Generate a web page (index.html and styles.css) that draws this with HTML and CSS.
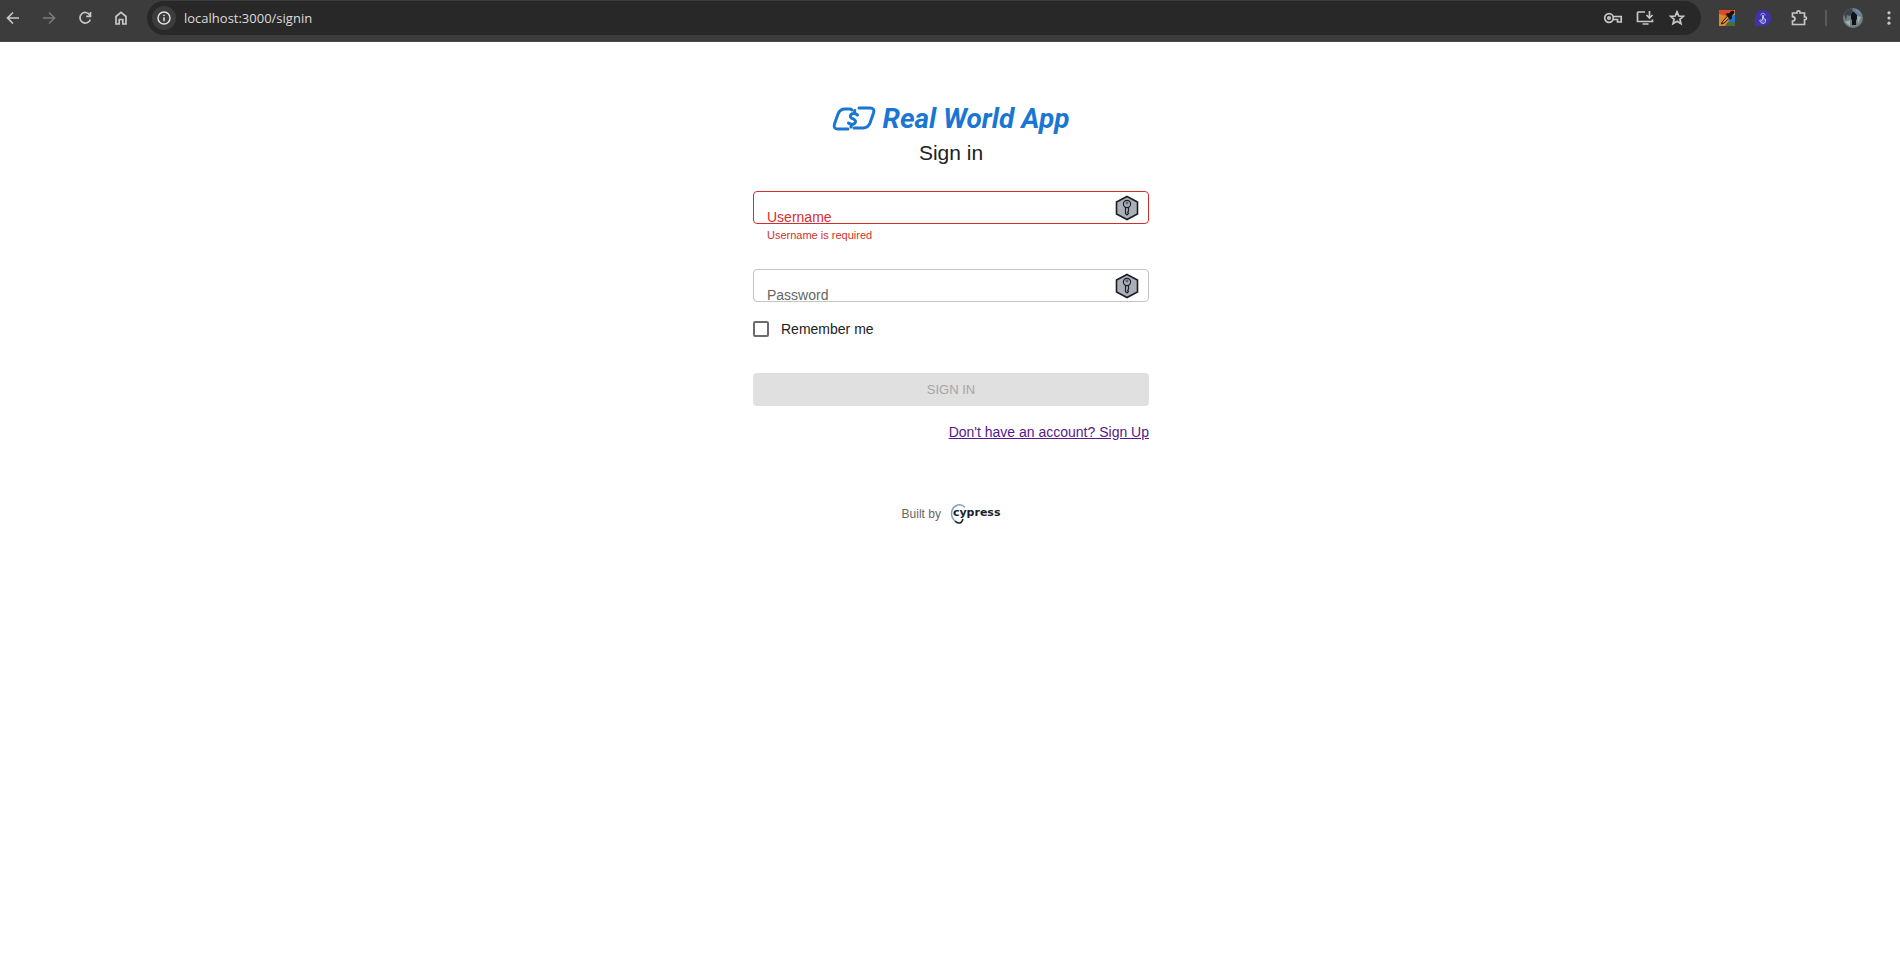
FILE: index.html
```html
<!DOCTYPE html>
<html lang="en">
<head>
<meta charset="utf-8">
<title>Sign in - Real World App</title>
<link rel="stylesheet" href="styles.css">
</head>
<body>
<header class="toolbar">
  <nav class="nav" aria-label="Browser">
    <button class="tool" aria-label="Back"><svg viewBox="0 0 16 16"><path d="M14 8H3M8 2.500L2.500 8L8 13.500"/></svg></button>
    <button class="tool dim" aria-label="Forward"><svg viewBox="0 0 16 16"><path d="M2 8H13M8 2.500L13.500 8L8 13.500"/></svg></button>
    <button class="tool" aria-label="Reload"><svg viewBox="0 0 16 16"><path d="M12.800 5A5.300 5.300 0 1 0 13.300 9.500M13.500 2V6.300H9.200"/></svg></button>
    <button class="tool" aria-label="Home"><svg viewBox="0 0 16 16"><path d="M3 6.500L8 2.300L13 6.500V14H9.800V9.500H6.200V14H3Z"/></svg></button>
  </nav>
  <div class="omnibox">
    <button class="info" aria-label="Site information"><svg viewBox="0 0 16 16"><circle cx="8" cy="8" r="6"/><path d="M8 7.300V11.300M8 4.700V6.100"/></svg></button>
    <input class="url" aria-label="Address" value="localhost:3000/signin">
    <button class="mini" aria-label="Passwords"><svg class="wide" viewBox="0 0 20 16"><circle cx="6" cy="8" r="4.300"/><circle cx="6" cy="8" r="1.200"/><path d="M10 6.500H18.200V12H14.500V9.500H10"/></svg></button>
    <button class="mini" aria-label="Install"><svg class="wide" viewBox="0 0 20 16"><path d="M10 2H3.200Q2.500 2 2.500 2.700V11.500H17.500V9.500M7.500 14H13.500M14.500 1V7.500M11.500 5L14.500 8L17.500 5"/></svg></button>
    <button class="mini" aria-label="Bookmark"><svg viewBox="0 0 16 16"><path d="M8 1.800L9.800 6L14.300 6.300L10.900 9.300L12 13.700L8 11.300L4 13.700L5.100 9.300L1.700 6.300L6.200 6Z"/></svg></button>
  </div>
  <div class="extensions">
    <button class="tool" aria-label="Color picker"><svg class="art" viewBox="0 0 16 16"><path fill="#d98a2b" d="M0 0H16V16H0Z"/><path fill="#df4a2a" d="M3 0H16L8 6L0 4V0Z"/><path fill="#1976d2" d="M16 5V13H9L11 6Z"/><path fill="#4d6b35" d="M6 16L9 12H16V16Z"/><path fill="#e8912a" stroke="#15131a" d="M2.500 14L3.500 11.500L9 5.500L11 7.500L5 13Z"/><path fill="#15131a" d="M6.500 4L9 3L10 3.500L12 1Q15 0 15.500 2Q15.500 3.500 12.700 6L13 8L11.500 10Z"/></svg></button>
    <button class="tool" aria-label="Click recorder"><svg class="art" viewBox="0 0 16 16"><path fill="#4530ac" d="M0 16V8A8 8 0 1 1 8 16Z"/><path fill="#4a62c4" stroke="#b9c4f2" d="M7.500 10V5.500Q8 4.800 8.500 5.500V8.500L10.500 9.200V11.500Q10 13.500 8 13.500Q6 13.500 4.700 10.500L5.500 9.700L7.500 11"/><path fill="none" stroke="#8f9be6" d="M5.700 5.500Q5.700 3.200 8 3.200Q10 3.400 10.200 5.500"/></svg></button>
    <button class="tool" aria-label="Extensions"><svg class="puzzle" viewBox="0 0 18 18"><path d="M2.500 4H7V3Q7 1.800 8.500 1.800Q10 1.800 10 3V4H14.500V8H15.500Q16.500 8 16.500 9.200Q16.500 10.500 15.500 10.500H14.500V15.500H2.500V12Q5 11.800 5 9.800Q5 7.800 2.500 7.600Z"/></svg></button>
    <span class="divider"></span>
    <button class="tool profile" aria-label="Profile"><svg class="avatar" viewBox="0 0 20 20"><circle cx="10" cy="10" r="10" fill="#6f7f84"/><path fill="#39454c" d="M1 6Q4 1 9 0L10 5L7 8L4 7L3 12Z"/><path fill="#5d8fd6" d="M12 1Q17 3 19 7L14 4Z"/><path fill="#a3adb0" d="M2 14L7 12V18ZM14 8L18 9L15 16Z"/><path fill="#0e1217" d="M9 5Q10 2 12 5L14 7V11L13 12V17H9V12L8 11V7Z"/></svg></button>
    <button class="tool" aria-label="Menu"><svg class="solid" viewBox="0 0 16 16"><circle cx="8" cy="2.800" r="1.600"/><circle cx="8" cy="8" r="1.600"/><circle cx="8" cy="13.200" r="1.600"/></svg></button>
  </div>
</header>
<main class="page">
  <div class="brand">
    <svg class="bill" viewBox="0 0 44 26" aria-hidden="true"><path d="M20 4L18.500 3H13Q8 3 6 8L2.500 18Q1 23 6 23H16M27 2H38Q43 2 41.500 7L38 17Q36 22 31 22H22"/><path d="M25.500 9Q22 6 19 8.500Q17 12 21.500 13Q25 15 22.500 17.500Q19.500 19.500 16.500 17M22.800 4.500L22 7.500M19.800 18.500L19 21"/></svg>
    <span>Real World App</span>
  </div>
  <h1 class="title">Sign in</h1>
  <form class="form">
    <div class="field invalid">
      <div class="box">
        <label for="username">Username</label>
        <input id="username" type="text" aria-describedby="username-help">
        <svg class="key" viewBox="0 0 24 26" aria-hidden="true"><path class="hex" d="M12 1.500L22.500 7V19L12 24.500L1.500 19V7Z"/><circle cx="12" cy="9" r="3.600"/><circle class="hole" cx="12" cy="8" r="1"/><path d="M10.500 12.500V18.500L12 20L13.500 18.500L12.700 17.200L13.500 16V12.500"/></svg>
      </div>
      <p id="username-help" class="help">Username is required</p>
    </div>
    <div class="field">
      <div class="box">
        <label for="password">Password</label>
        <input id="password" type="password">
        <svg class="key" viewBox="0 0 24 26" aria-hidden="true"><path class="hex" d="M12 1.500L22.500 7V19L12 24.500L1.500 19V7Z"/><circle cx="12" cy="9" r="3.600"/><circle class="hole" cx="12" cy="8" r="1"/><path d="M10.500 12.500V18.500L12 20L13.500 18.500L12.700 17.200L13.500 16V12.500"/></svg>
      </div>
    </div>
    <label class="remember"><input type="checkbox"><span>Remember me</span></label>
    <button class="submit" type="submit" disabled>SIGN IN</button>
    <a class="signup" href="#signup">Don't have an account? Sign Up</a>
  </form>
  <footer class="credit">
    <span>Built by</span>
    <a class="cypress" href="#cypress" aria-label="Cypress"><svg class="ring" viewBox="0 0 20 22" aria-hidden="true"><path class="blue" d="M15 4.500Q12 1.200 8 2Q2 3.500 1.500 10Q1.500 15 5 18"/><path d="M5 18Q7 20.500 10 20Q12 19.500 13 16"/></svg><span>cypress</span></a>
  </footer>
</main>
</body>
</html>
```

FILE: styles.css
```css
* { box-sizing: border-box; }
body { margin: 0; background: #fff; color: #212121; font: 14px/20px "Liberation Sans", Arial, sans-serif; }
button, input { font: inherit; }
svg { display: block; width: 16px; height: 16px; fill: none; stroke: currentColor; stroke-width: 1.7; }

.toolbar { display: flex; align-items: flex-start; height: 42px; padding-top: 1px; background: #3c3c3c; border-bottom: 1px solid #4a4a4a; color: #c7c7c7; }
.nav, .extensions { display: flex; align-items: center; height: 34px; }
.nav { margin-left: -5px; margin-right: 8px; }
.tool { display: flex; align-items: center; justify-content: center; width: 36px; height: 34px; padding: 0; border: 0; background: none; color: inherit; }
.dim { color: #7b7b7b; }
.tool svg.art { stroke: none; stroke-width: 1; }
.tool svg.avatar { width: 20px; height: 20px; stroke: none; }
.tool svg.puzzle { width: 18px; height: 18px; }
.tool svg.solid { fill: currentColor; stroke: none; }
.extensions { margin-left: 8px; margin-right: -7px; }
.divider { width: 2px; height: 16px; margin: 0 8px; background: #545a66; }
.omnibox { display: flex; flex: 1; align-items: center; height: 34px; padding: 0 8px 0 5px; border-radius: 17px; background: #282828; }
.info { display: flex; align-items: center; justify-content: center; width: 24px; height: 24px; padding: 0; border: 0; border-radius: 50%; background: #3c3c3c; color: #e3e3e3; }
.info svg { stroke-width: 1.5; }
.url { flex: 1; height: 24px; margin-left: 8px; padding: 0; border: 0; background: none; color: #dcdcdc; font: 13px/20px "Open Sans", "Noto Sans", sans-serif; }
.mini { display: flex; align-items: center; justify-content: center; width: 32px; height: 32px; padding: 0; border: 0; background: none; color: inherit; }
svg.wide { width: 20px; }

.page { max-width: 444px; margin: 0 auto; padding: 60px 23px 0 25px; }
.brand { display: flex; align-items: center; justify-content: center; gap: 6px; height: 34px; color: #1976d2; font: italic 700 28px/34px Roboto, sans-serif; }
.bill { width: 44px; height: 26px; stroke-width: 3; stroke-linecap: round; stroke-linejoin: round; }
.title { margin: 2px 0 0; font-size: 21px; line-height: 30px; font-weight: 400; text-align: center; }
.form { display: flex; flex-direction: column; margin-top: 23px; }
.field { height: 78px; }
.box { position: relative; display: flex; align-items: center; height: 33px; padding: 0 9px 0 13px; border: 1px solid #c4c4c4; border-radius: 4px; color: #666; }
.box label { position: absolute; left: 13px; top: 15px; line-height: 20px; }
.box input { flex: 1; min-width: 0; height: 31px; padding: 0; border: 0; outline: 0; background: none; }
.invalid .box { border-color: #d32f2f; color: #d32f2f; }
.key { width: 24px; height: 26px; color: #1b1f24; stroke-width: 1.2; }
.hex { fill: #a9b0b9; stroke-width: 1.6; }
.hole { stroke-width: 0.6; }
.help { margin: 2px 14px 0; color: #d32f2f; font-size: 11px; line-height: 18px; }
.remember { display: flex; align-items: center; gap: 12px; height: 20px; margin-top: -28px; }
.remember input { appearance: none; width: 16px; height: 16px; margin: 0; border: 2px solid #6b6b6b; border-radius: 2px; }
.submit { height: 33px; margin-top: 34px; border: 0; border-radius: 4px; background: #e0e0e0; color: #a6a6a6; font-size: 13px; line-height: 16px; }
.signup { align-self: flex-end; margin-top: 16px; color: #551a8b; }
.credit { display: flex; align-items: center; justify-content: center; gap: 9px; height: 24px; margin-top: 60px; color: #666; font-size: 12px; }
.cypress { display: flex; align-items: center; color: #1b1e2e; font: 700 11px/20px "DejaVu Sans", sans-serif; text-decoration: none; }
.cypress span { margin-left: -17px; padding-bottom: 2px; }
.ring { width: 20px; height: 22px; stroke-width: 1.5; }
.blue { stroke: #7ba7bd; }
```
